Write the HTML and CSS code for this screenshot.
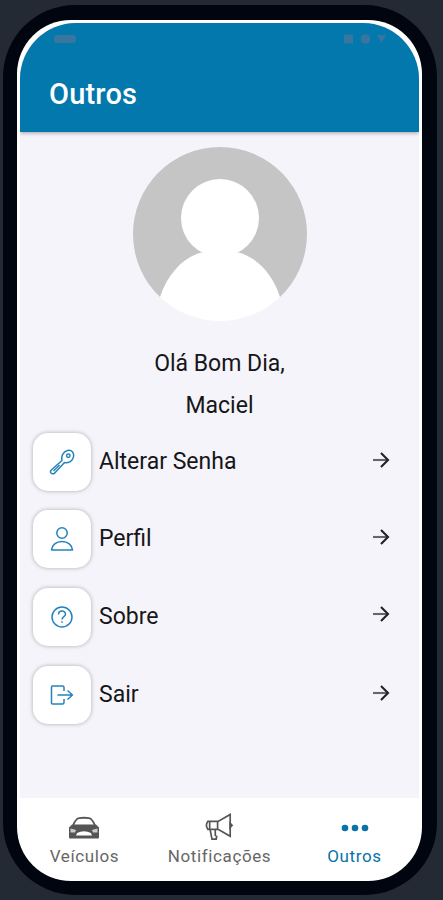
FILE: index.html
```
<!DOCTYPE html>
<html lang="pt-BR">
<head>
<meta charset="utf-8">
<title>Outros</title>
<link rel="stylesheet" href="styles.css">
</head>
<body>
<div class="phone">
  <div class="shell">
    <div class="screen">
      <header class="appbar">
        <div class="status">
          <span class="clock"></span>
          <svg width="43" height="10" viewBox="0 0 43 10"><rect x="1" y="0.5" width="9" height="9"/><circle cx="22.5" cy="5" r="4.8"/><path d="M34 1h9l-4.500 8z"/></svg>
        </div>
        <h1>Outros</h1>
      </header>
      <main>
        <svg class="avatar" width="174" height="174" viewBox="0 0 174 174">
          <path d="M27 150A87 87 0 1 1 147 150Z" fill="#c5c5c5"/>
          <circle cx="87" cy="71" r="39" fill="#fff"/>
          <path d="M27 150C35 126 50 111 68 105.500H106C124 111 139 126 147 150A87 87 0 0 1 27 150Z" fill="#fff"/>
        </svg>
        <p class="hello">Olá Bom Dia,</p>
        <p class="name">Maciel</p>
        <ul class="menu">
          <li><span class="tile"><svg width="26" height="26" viewBox="0 0 26 26"><path d="M13 11.500C12 7.500 14 2.500 18.500 1.500C23 .5 25.500 4 24.300 8.500C23 12.500 19 14.500 15.500 13.500L5.500 24.300Q3.500 25.500 2 24Q.8 22.500 2.300 21Z"/><circle cx="19.300" cy="6.700" r="1.700"/><path d="M4.500 22l6-6"/></svg></span><span class="label">Alterar Senha</span><svg class="arrow" width="18" height="16" viewBox="0 0 18 16"><path d="M1 8h15" class="shaft"/><path d="M9 1l7 7-7 7"/></svg></li>
          <li><span class="tile"><svg width="26" height="26" viewBox="0 0 26 26"><circle cx="13" cy="7" r="5.200"/><path d="M2.500 24C3 19 7 15.500 13 15.500S23 19 23.500 24Z"/></svg></span><span class="label">Perfil</span><svg class="arrow" width="18" height="16" viewBox="0 0 18 16"><path d="M1 8h15" class="shaft"/><path d="M9 1l7 7-7 7"/></svg></li>
          <li><span class="tile"><svg width="26" height="26" viewBox="0 0 26 26"><circle cx="13" cy="13" r="10"/><path d="M9.500 10.500C9.500 6 16.500 6 16.500 10.200C16.500 12.700 13 12.500 13 15.500M13 17.300v1.500"/></svg></span><span class="label">Sobre</span><svg class="arrow" width="18" height="16" viewBox="0 0 18 16"><path d="M1 8h15" class="shaft"/><path d="M9 1l7 7-7 7"/></svg></li>
          <li><span class="tile"><svg width="26" height="26" viewBox="0 0 26 26"><path d="M15 9V5.500Q15 4 13.500 4H3.500Q2.500 4 2.500 5V21Q2.500 22 3.500 22H13.500Q15 22 15 20.500V17M8.500 13H23.500M18.500 8.500l5 4.500-5 4.500"/></svg></span><span class="label">Sair</span><svg class="arrow" width="18" height="16" viewBox="0 0 18 16"><path d="M1 8h15" class="shaft"/><path d="M9 1l7 7-7 7"/></svg></li>
        </ul>
      </main>
      <nav class="tabs">
        <a class="tab vehicles"><svg width="32" height="28" viewBox="0 0 32 28"><path d="M5 12.500Q8 5.500 11 5.200Q16 4.300 21 5.200Q24 5.500 27 12.500" fill="none" stroke="#555" stroke-width="1.800"/><path d="M4 11.500H28L31 14.500V24Q31 25.500 30 25.500H2Q1 25.500 1 24V14.500Z" fill="#555"/><path d="M2.500 15.500l5.500 1.500-1 2.500H2.500zM29.500 15.500l-5.500 1.500 1 2.500h4.500z" fill="#ccc"/><path d="M9 20Q16 16.500 23 20l1 2.500H8z" fill="#fff"/></svg><span>Veículos</span></a>
        <a class="tab notices"><svg width="32" height="30" viewBox="0 0 32 30" fill="none" stroke="#555" stroke-width="1.800"><path d="M4 9H15L28 1.500V25L15 17.500H4Q1 13 4 9ZM14.500 9V17.500M6 9V17.500M6.500 18L8.500 28H13L13.500 25L12 24V17.500"/><path d="M28 11l2 2.200-2 2.300z" fill="#555"/></svg><span>Notificações</span></a>
        <a class="tab others"><svg width="28" height="10" viewBox="0 0 28 10" fill="#0872a9"><circle cx="4" cy="5" r="3.300"/><circle cx="14" cy="5" r="3.300"/><circle cx="24" cy="5" r="3.300"/></svg><span>Outros</span></a>
      </nav>
    </div>
  </div>
</div>
</body>
</html>
```
FILE: styles.css
```
* { box-sizing: border-box; margin: 0; padding: 0; }
body { height: 900px; background: #242a33; font-family: Roboto, sans-serif; color: #161618; padding: 5px 6px 5px 3px; overflow: hidden; }
.phone { height: 890px; background: #01050f; border-radius: 72px; padding: 15px 15px 14px 14px; }
.shell { height: 861px; background: #fff; border-radius: 54px; padding: 3px; }
.screen { height: 855px; border-radius: 56px 56px 52px 52px; overflow: hidden; display: flex; flex-direction: column; background: #f4f4fa; }
.appbar { flex: none; height: 109px; background: #0378ad; box-shadow: 0 1px 4px rgba(0,0,0,.35); padding: 11px 33px 0 34px; position: relative; }
.status { display: flex; justify-content: space-between; align-items: center; height: 10px; fill: #39769f; }
.clock { width: 22px; height: 8px; border-radius: 3px; background: #39769f; }
h1 { font-size: 29px; font-weight: 500; line-height: 34px; letter-spacing: .2px; color: #fff; margin: 33px 0 0 -5px; }
main { flex: 1; display: flex; flex-direction: column; align-items: center; padding-top: 15px; }
.avatar { flex: none; }
.hello, .name { font-size: 23px; line-height: 28px; }
.hello { margin-top: 29px; }
.name { margin-top: 14px; }
.menu { list-style: none; width: 100%; padding: 0 29px 0 13px; margin-top: 13px; display: grid; gap: 19.3px; }
.menu li { display: flex; align-items: center; height: 58px; }
.menu li:last-child { margin-top: 1px; }
.tile { width: 58px; height: 58px; border-radius: 15px; background: #fff; box-shadow: 0 0 4px rgba(0,0,0,.3); display: flex; align-items: center; justify-content: center; }
.tile svg { fill: none; stroke: #2583bb; stroke-width: 1.5; stroke-linejoin: round; }
.label { font-size: 23px; line-height: 28px; margin-left: 8px; flex: 1; }
.arrow { fill: none; stroke: #222; stroke-width: 2.1; margin-top: -4.5px; }
.shaft { stroke: #666; }
.tabs { flex: none; height: 80px; background: #fff; display: grid; grid-template-columns: 129px 141px 129px; }
.tab { display: flex; flex-direction: column; align-items: center; font-size: 17px; line-height: 20px; letter-spacing: .62px; color: #666; height: 80px; padding-top: 15px; }
.tab svg { height: 28px; margin-bottom: 5px; }
.vehicles svg { margin-right: 1px; }
.notices svg { margin-right: 2px; }
.others svg { margin-top: 1px; margin-bottom: 4px; }
.others { color: #0872a9; }
```
